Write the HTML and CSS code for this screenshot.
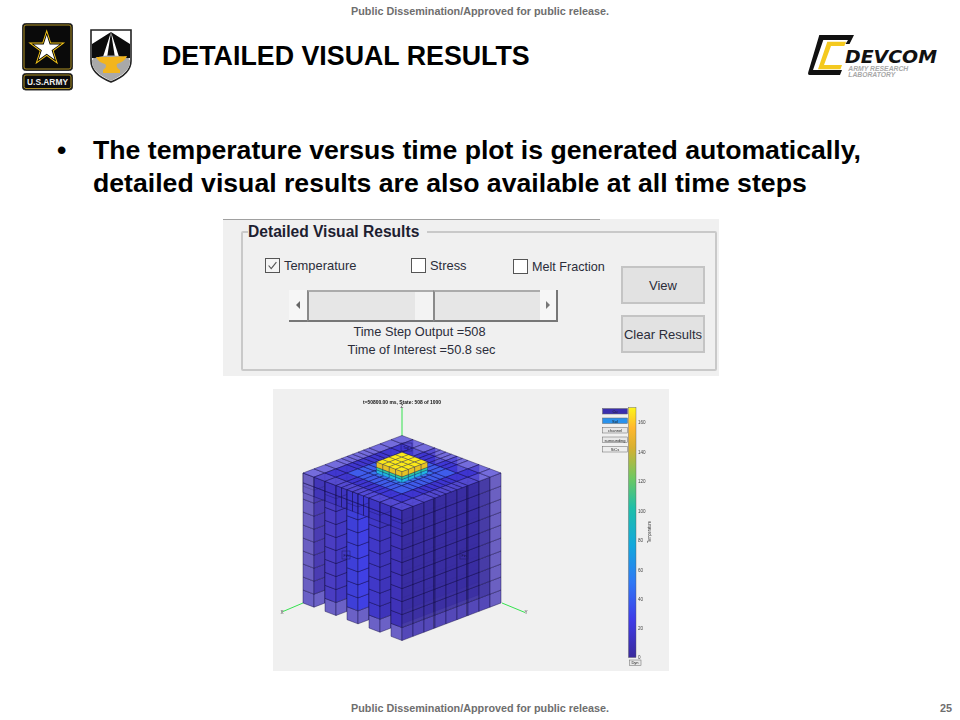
FILE: index.html
```html
<!DOCTYPE html>
<html>
  <head>
    <title>Detailed Visual Results</title>
    <link rel="stylesheet" href="styles.css">
  </head>
  <body>
    <div class="slide">
      <div class="note">Public Dissemination/Approved for public release.</div>

      <div class="header">
        <svg class="army" viewBox="0 0 52 68">
          <defs>
            <polygon id="star" points="24.7,6.3 29,19.6 43.1,19.6 31.7,27.9 36,41.2 24.7,33 13.4,41.2 17.7,27.9 6.3,19.6 20.4,19.6"/>
          </defs>
          <rect x="0.5" y="0.5" width="50" height="47" rx="3" fill="#0a0a0a" stroke="#333"/>
          <rect x="2" y="2" width="47" height="44" rx="2" fill="none" stroke="#d9b52c" stroke-width="0.8"/>
          <use href="#star" fill="#f5c518"/>
          <use href="#star" fill="#000" transform="translate(24.7 25.6) scale(.84) translate(-24.7 -25.6)"/>
          <use href="#star" fill="#fff" transform="translate(24.7 25.6) scale(.7) translate(-24.7 -25.6)"/>
          <rect x="0.5" y="50.5" width="50" height="16.5" rx="3" fill="#0a0a0a" stroke="#333"/>
          <rect x="2" y="52" width="47" height="13.5" rx="2" fill="none" stroke="#d9b52c" stroke-width="0.8"/>
          <text x="5" y="62" class="army-text" textLength="41" lengthAdjust="spacingAndGlyphs">U.S.ARMY</text>
        </svg>
        <svg class="shield" viewBox="0 0 42 54">
          <path d="M1 1H41V32C41 42 31 49 21 53C11 49 1 42 1 32Z" fill="#fff" stroke="#222" stroke-width="1.6"/>
          <path d="M21 3L2 15V29L12 31Z M21 3L40 15V29L30 31Z M21 3L17 29H25Z" fill="#0c0c0c"/>
          <path d="M2 31C8 25 34 25 40 31V33C40 41 31 47 21 52C11 47 2 41 2 33Z" fill="#a9a9a9"/>
          <path d="M6 28C14 28 28 28 37 27C35 32 30 34 27 35C26 37 27 39 30 41V44H13V41C16 39 17 37 15 35C11 34 8 32 6 28Z" fill="#f2b51d"/>
        </svg>
        <h1 class="title">DETAILED VISUAL RESULTS</h1>
        <svg class="devcom" viewBox="0 0 130 44">
          <path d="M11.3 1H46L41.5 10H37.5L40 6H15.3L5 36H34L32 41H1.5Q-0.5 41 0.3 38Z" fill="#111"/>
          <path d="M19.3 7.7H38L36.3 12H23L16 31H34L32.5 35.3H10Z" fill="#f4c91f"/>
          <text x="37" y="28.7" class="devcom-name" textLength="92" lengthAdjust="spacingAndGlyphs">DEVCOM</text>
          <text x="40.3" y="37" class="devcom-sub" textLength="60" lengthAdjust="spacingAndGlyphs">ARMY RESEARCH</text>
          <text x="40.3" y="43.3" class="devcom-sub" textLength="47" lengthAdjust="spacingAndGlyphs">LABORATORY</text>
        </svg>
      </div>

      <div class="bullet">
        <span class="dot">•</span>
        <p class="bullet-text">The temperature versus time plot is generated automatically, detailed visual results are also available at all time steps</p>
      </div>

      <div class="gui">
        <div class="gui-rule"></div>
        <fieldset class="group">
          <legend>Detailed Visual Results</legend>
          <div class="group-body">
            <div class="controls">
              <div class="checks">
                <label class="check"><span class="box is-on"><svg viewBox="0 0 15 15"><path d="M3 7.5L6 11L12 3.5" fill="none" stroke="#555" stroke-width="1.3"/></svg></span>Temperature</label>
                <label class="check"><span class="box"></span>Stress</label>
                <label class="check check-melt"><span class="box"></span>Melt Fraction</label>
              </div>
              <div class="slider">
                <span class="arrow"><i class="tri tri-left"></i></span>
                <span class="track"></span>
                <span class="thumb"></span>
                <span class="track"></span>
                <span class="arrow arrow-right"><i class="tri tri-right"></i></span>
              </div>
              <div class="readout readout-step">Time Step Output =508</div>
              <div class="readout">Time of Interest =50.8 sec</div>
            </div>
            <div class="buttons">
              <button class="btn">View</button>
              <button class="btn">Clear Results</button>
            </div>
          </div>
        </fieldset>
      </div>

      <svg class="plot" viewBox="273 389 396 282">
        <defs>
          <linearGradient id="parula" x1="0" y1="1" x2="0" y2="0">
            <stop offset="0" stop-color="#3a2a9c"/>
            <stop offset=".15" stop-color="#3f3be8"/>
            <stop offset=".3" stop-color="#2f78f5"/>
            <stop offset=".45" stop-color="#12a8dc"/>
            <stop offset=".6" stop-color="#1fbfa8"/>
            <stop offset=".72" stop-color="#70c860"/>
            <stop offset=".84" stop-color="#d8b030"/>
            <stop offset=".92" stop-color="#ffb82e"/>
            <stop offset="1" stop-color="#fdf51a"/>
          </linearGradient>
        </defs>

        <line x1="402" y1="436" x2="402" y2="408" class="axis"/>
        <text x="402" y="408" class="tiny" text-anchor="middle">Z</text>
        <text x="402" y="404" class="plot-title" text-anchor="middle" textLength="78" lengthAdjust="spacingAndGlyphs">t=50800.00 ms, State: 508 of 1000</text>
        <line x1="303" y1="603" x2="283" y2="611.5" class="axis"/>
        <line x1="502" y1="603" x2="525" y2="612.5" class="axis"/>
        <text x="282" y="614" class="tiny" text-anchor="middle">X</text>
        <text x="526" y="614" class="tiny" text-anchor="middle">Y</text>

        <g id="mesh"></g>

        <g class="tag">
          <rect x="342" y="551" width="8" height="8"/><text x="346" y="556.5" text-anchor="middle">Fin</text>
          <rect x="460" y="551" width="8" height="8"/><text x="464" y="556.5" text-anchor="middle">Fin</text>
          <rect x="401" y="443" width="11" height="8"/><text x="406" y="448.5" text-anchor="middle">Top</text>
        </g>

        <g class="legend-box">
          <rect x="602.5" y="408.5" width="25" height="5.5" fill="#3a2fae"/><text x="615" y="413" fill="#ccc">Cu</text>
          <rect x="602.5" y="418" width="25" height="5.5" fill="#2a92ec"/><text x="615" y="422.5" fill="#7a8aa0">Sol</text>
          <rect x="602.5" y="427.5" width="25" height="5.5" fill="#e8e8e8"/><text x="615" y="432">channel</text>
          <rect x="602.5" y="437" width="25" height="5.5" fill="#e8e8e8"/><text x="615" y="441.5">surrounding</text>
          <rect x="602.5" y="446.5" width="25" height="5.5" fill="#eeeeee"/><text x="615" y="451">SiCs</text>
        </g>

        <rect x="628.5" y="407.5" width="7.5" height="250" fill="url(#parula)" stroke="#555" stroke-width=".4"/>
        <g class="ticks">
          <text x="638" y="424">160</text>
          <text x="638" y="454">140</text>
          <text x="638" y="483">120</text>
          <text x="638" y="513">100</text>
          <text x="638" y="542">80</text>
          <text x="638" y="572">60</text>
          <text x="638" y="601">40</text>
          <text x="638" y="630">20</text>
          <text x="638" y="659">0</text>
        </g>
        <text class="tiny" transform="translate(650.5 543) rotate(-90)" textLength="22" lengthAdjust="spacingAndGlyphs">Temperature</text>
        <g class="legend-box">
          <rect x="629.5" y="660" width="11.5" height="5.5" fill="#e8e8e8"/><text x="635" y="664.3">Dyn</text>
        </g>
      </svg>

      <div class="footer">
        <span></span>
        <span class="note-foot">Public Dissemination/Approved for public release.</span>
        <span class="page-num">25</span>
      </div>
    </div>
    <script src="plot.js"></script>
  </body>
</html>
```

FILE: styles.css
```css
body {
  margin: 0;
  background-color: #fff;
  font-family: "Liberation Sans", Arial, sans-serif;
}

.slide {
  width: 960px;
  height: 720px;
  display: flex;
  flex-direction: column;
  overflow: hidden;
}

.note {
  height: 22px;
  line-height: 22px;
  text-align: center;
  font-size: 10.8px;
  font-weight: bold;
  color: #6e6e6e;
}

.header {
  display: flex;
  align-items: flex-start;
  height: 68px;
  margin-top: 1px;
  padding: 0 22px;
}

.army {
  width: 52px;
  height: 68px;
}

.army-text {
  font-size: 8.5px;
  font-weight: bold;
  fill: #eee;
}

.shield {
  width: 42px;
  height: 54px;
  margin: 6px 0 0 16px;
}

.title {
  margin: 19px 0 0 30px;
  font-size: 26.8px;
  line-height: 28px;
  font-weight: bold;
  color: #000;
}

.devcom {
  width: 130px;
  height: 44px;
  margin: 11px 0 0 auto;
  overflow: visible;
}

.devcom-name {
  font-family: "DejaVu Sans", sans-serif;
  font-size: 17.5px;
  font-weight: bold;
  font-style: italic;
  fill: #111;
}

.devcom-sub {
  font-size: 6.6px;
  font-weight: bold;
  font-style: italic;
  fill: #a8a8a8;
}

.bullet {
  display: flex;
  margin-top: 43px;
  padding-left: 57px;
  color: #000;
  font-size: 26.65px;
  line-height: 33px;
  font-weight: bold;
}

.dot {
  width: 36px;
}

.bullet-text {
  margin: 0;
  width: 790px;
}

.gui {
  width: 496px;
  height: 157px;
  margin: 19px 0 0 223px;
  padding-right: 2px;
  box-sizing: border-box;
  background-color: #f0f0f0;
  color: #2b2d3a;
}

.gui-rule {
  width: 377px;
  height: 1px;
  background-color: #a0a0a0;
}

.group {
  height: 149px;
  box-sizing: border-box;
  margin: 2px 0 0 18px;
  padding: 0 10px 0 22px;
  border: 2px solid #c9c9c9;
  border-radius: 2px;
}

.group legend {
  padding: 0 8px 0 0;
  margin-left: -17px;
  font-size: 15.6px;
  line-height: 19px;
  font-weight: bold;
  color: #1d2030;
}

.group-body {
  display: flex;
  justify-content: space-between;
}

.controls {
  width: 320px;
}

.checks {
  display: grid;
  grid-template-columns: 146px 102px auto;
  width: 360px;
  margin-top: 16px;
}

.check {
  display: flex;
  align-items: center;
  gap: 4px;
  font-size: 12.9px;
  white-space: nowrap;
}

.check-melt {
  margin-top: 2px;
  font-size: 12.6px;
}

.box {
  width: 13px;
  height: 13px;
  border: 1px solid #555;
  background-color: #fff;
}

.box.is-on {
  background-color: #f4f4f4;
}

.box svg {
  display: block;
  width: 13px;
  height: 13px;
}

.slider {
  display: flex;
  width: 269px;
  height: 32px;
  margin: 16px 0 0 24px;
}

.arrow {
  display: flex;
  align-items: center;
  justify-content: center;
  width: 18px;
  box-sizing: border-box;
  background-color: #f6f6f6;
  border-bottom: 2px solid #777;
}

.arrow-right {
  border-right: 2px solid #777;
}

.tri {
  width: 0;
  height: 0;
  border-top: 4px solid transparent;
  border-bottom: 4px solid transparent;
}

.tri-left {
  border-right: 4px solid #666;
}

.tri-right {
  border-left: 4px solid #777;
}

.track {
  flex: 1;
  box-sizing: border-box;
  background-color: #e6e6e6;
  border-top: 2px solid #ababab;
  border-left: 2px solid #8a8a8a;
  border-bottom: 2px solid #777;
}

.thumb {
  width: 18px;
  box-sizing: border-box;
  background-color: #f3f3f3;
  border-top: 2px solid #ababab;
  border-bottom: 2px solid #777;
}

.readout {
  width: 269px;
  margin-left: 22px;
  text-align: center;
  font-size: 12.8px;
  line-height: 18px;
}

.readout-step {
  width: 265px;
  margin-top: 1px;
}

.buttons {
  display: flex;
  flex-direction: column;
  gap: 11px;
  margin-top: 25px;
}

.btn {
  width: 84px;
  height: 38px;
  padding: 0;
  background-color: #e2e2e2;
  border: 2px solid #c4c4c4;
  color: #2b2d3a;
  font-family: "Liberation Sans", Arial, sans-serif;
  font-size: 13px;
  white-space: nowrap;
}

.plot {
  display: block;
  width: 396px;
  height: 282px;
  margin: 13px 0 0 273px;
  background-color: #f0f0f0;
  filter: blur(0.3px);
}

.axis {
  stroke: #35e24f;
  stroke-width: 1;
}

.tiny {
  font-size: 4.6px;
  fill: #333;
}

.plot-title {
  font-size: 5.2px;
  font-weight: bold;
  fill: #111;
}

.tag rect {
  fill: none;
  stroke: #201a60;
  stroke-width: 0.5;
}

.tag text {
  font-size: 3.6px;
  fill: #15123c;
}

.legend-box rect {
  stroke: #666;
  stroke-width: 0.5;
}

.legend-box text {
  font-size: 4px;
  text-anchor: middle;
  fill: #222;
}

.ticks text {
  font-size: 4.6px;
  fill: #444;
}

.footer {
  display: grid;
  grid-template-columns: 1fr auto 1fr;
  height: 24px;
  margin-top: auto;
  padding: 0 8px;
  line-height: 24px;
  font-size: 10.8px;
  font-weight: bold;
  color: #6e6e6e;
}

.page-num {
  justify-self: end;
}
```

FILE: plot.js
```js
// isometric mesh of the heat sink, back to front
const mesh = document.getElementById("mesh");
const LINE = "rgba(20,14,70,0.8)";
let lineWidth = "0.55";

function pt(u, v, h) {
  return [303 + 11 * (u + v), 603 + 4.17 * (u - v) - 13 * h];
}

function quad(a, b, c, d, fill) {
  const p = document.createElementNS("http://www.w3.org/2000/svg", "polygon");
  p.setAttribute("points", [a, b, c, d].map((q) => q.join(",")).join(" "));
  p.setAttribute("fill", fill);
  p.setAttribute("stroke", LINE);
  p.setAttribute("stroke-width", lineWidth);
  mesh.appendChild(p);
}

function range(from, to, step) {
  const out = [];
  for (let x = from; x < to - 0.001; x += step) out.push(x);
  out.push(to);
  return out;
}

// face looking down-left, along u at a fixed v
function faceV(v, us, hs, fill) {
  for (let i = 0; i < us.length - 1; i++) {
    for (let j = 0; j < hs.length - 1; j++) {
      quad(pt(us[i], v, hs[j]), pt(us[i + 1], v, hs[j]), pt(us[i + 1], v, hs[j + 1]), pt(us[i], v, hs[j + 1]), fill(i, j));
    }
  }
}

// face looking down-right, along v at a fixed u
function faceU(u, vs, hs, fill) {
  for (let i = 0; i < vs.length - 1; i++) {
    for (let j = 0; j < hs.length - 1; j++) {
      quad(pt(u, vs[i], hs[j]), pt(u, vs[i + 1], hs[j]), pt(u, vs[i + 1], hs[j + 1]), pt(u, vs[i], hs[j + 1]), fill(i, j));
    }
  }
}

const grid = [0, 1, 2, 3, 3.5, 4, 4.5, 5, 5.5, 6, 7, 8, 9];
const finLeft = ["#6a5fc2", "#4a3dc2", "#3e3fd8", "#4038c8", "#3f32b8"];
const finRight = ["#4a3cb2", "#4238c2", "#4040e4", "#3e34ba", "#3d31aa"];
const rows = range(0, 10, 1);

for (let i = 0; i < 5; i++) {
  const u0 = i * 2;
  const pale = (c, j) => (j === 0 ? "#6b61c6" : c);
  faceV(0, [u0, u0 + 1], rows, (a, j) => pale(finLeft[i], j));
  if (i < 4) {
    faceU(u0 + 1, range(0, 9, 1), rows, (a, j) => pale(finRight[i], j));
  }
}

// top plate edge, see-through so the fins stay visible
faceV(0, grid, [8.5, 9.25, 10], (a) => (a === 0 ? "rgba(106,95,194,0.6)" : "rgba(58,48,190,0.5)"));

// long outer face, also see-through
const sideCols = range(0, 9, 1).flatMap((x) => (x > 0 && x < 9 && x % 3 === 0 ? [x - 0.12, x] : [x]));
faceU(9, sideCols, rows, (a, j) => {
  if (a >= sideCols.length - 2) return "#6b60c2";
  return j === 0 ? "#5448b8" : "rgba(56,44,160,0.92)";
});

// top face, finer near the middle
for (let a = 0; a < grid.length - 1; a++) {
  for (let b = 0; b < grid.length - 1; b++) {
    const d = Math.max(Math.abs(grid[a] + 0.25 - 4.5), Math.abs(grid[b] + 0.25 - 4.5));
    let c = "rgba(62,54,212,0.85)";
    if (d > 3.6) c = "rgba(88,78,215,0.82)";
    else if (d < 1.6) c = "#3a74f0";
    else if (d < 2.4) c = "#3f5cea";
    quad(pt(grid[a], grid[b], 10), pt(grid[a + 1], grid[b], 10), pt(grid[a + 1], grid[b + 1], 10), pt(grid[a], grid[b + 1], 10), c);
  }
}

// chip on top, thinner lines so the yellow stays bright
lineWidth = "0.35";
const lo = 3.34;
const hi = 5.66;
const cells = range(lo, hi, (hi - lo) / 4);
const bands = [
  [10, 10.25, "#22b4e4"],
  [10.25, 10.45, "#2cc6a2"],
  [10.45, 10.85, "#e6c224"],
];
bands.forEach((b) => {
  faceV(lo, cells, [b[0], b[1]], () => b[2]);
  faceU(hi, cells, [b[0], b[1]], () => b[2]);
});
for (let a = 0; a < 4; a++) {
  for (let b = 0; b < 4; b++) {
    quad(pt(cells[a], cells[b], 10.85), pt(cells[a + 1], cells[b], 10.85), pt(cells[a + 1], cells[b + 1], 10.85), pt(cells[a], cells[b + 1], 10.85), "#fbe91a");
  }
}
```
